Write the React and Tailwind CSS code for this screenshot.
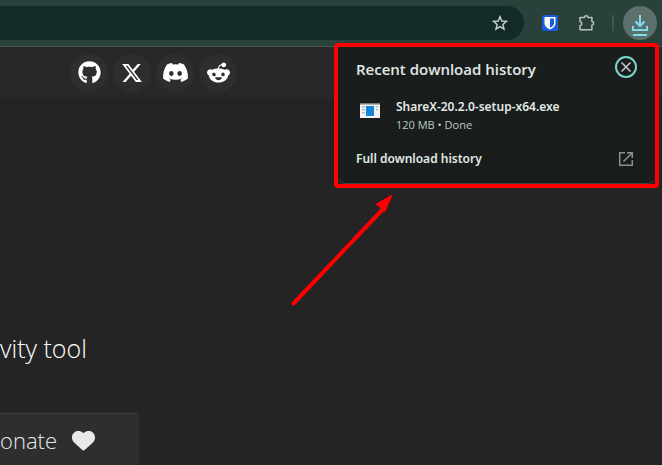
import { FaGithub, FaXTwitter, FaDiscord, FaRedditAlien, FaHeart } from "react-icons/fa6";

const socials = [
  { name: "GitHub", Icon: FaGithub, size: 23 },
  { name: "X", Icon: FaXTwitter, size: 22 },
  { name: "Discord", Icon: FaDiscord, size: 27 },
  { name: "Reddit", Icon: FaRedditAlien, size: 23 },
];

function StarIcon() {
  return (
    <svg width="16" height="16" viewBox="0 0 16 16" fill="none" stroke="#c3cecb" strokeWidth="1.5" aria-hidden="true">
      <path d="M8 1.7 9.8 6l4.7.4-3.6 3.1 1.1 4.6L8 11.6l-4 2.5 1.1-4.6L1.500 6.400 6.200 6z" />
    </svg>
  );
}

function ShieldIcon() {
  return (
    <svg width="16" height="16" viewBox="0 0 16 16" aria-hidden="true">
      <rect width="16" height="16" rx="2" fill="#175ddc" />
      <path d="M2.500 2h11v6.300c0 3-2.800 5-5.500 6.200-2.700-1.200-5.500-3.200-5.500-6.200z" fill="#fff" />
      <path d="M8 3.600h4v4.700c0 2-2 3.500-4 4.500z" fill="#175ddc" />
    </svg>
  );
}

function PuzzleIcon() {
  return (
    <svg width="18" height="18" viewBox="0 0 18 18" fill="none" stroke="#b5c4c0" strokeWidth="1.5" strokeLinejoin="round" aria-hidden="true">
      <path d="M2 3.500h4.500a1.700 1.700 0 0 1 3.400 0h4v4a1.700 1.700 0 0 1 0 3.400v4.900H2v-4a2.200 2.200 0 0 0 0-4.300z" />
    </svg>
  );
}

function DownloadIcon() {
  return (
    <svg width="18" height="22" viewBox="0 0 18 22" fill="none" stroke="#7fdcec" strokeWidth="2" aria-hidden="true">
      <path d="M9 0v10M4.500 6.500 9 11l4.500-4.500M2 11v4h14v-4M2 20h14" />
    </svg>
  );
}

function Toolbar() {
  return (
    <header className="flex h-[47px] items-start border-b border-[#47544f] bg-[#29403b] pt-1.5 pr-[5px]">
      <div className="flex h-[34px] min-w-0 flex-1 items-center justify-end rounded-r-full bg-[#122b27] pr-4">
        <button aria-label="Bookmark this tab" className="block"><StarIcon /></button>
      </div>
      <div className="flex h-[34px] items-center pl-[18px]">
        <button aria-label="Password manager"><ShieldIcon /></button>
        <button aria-label="Extensions" className="ml-5"><PuzzleIcon /></button>
        <span className="mr-[9px] ml-4 h-4 w-0.5 bg-[#3d5650]" />
        <button aria-label="Downloads" className="flex size-[34px] items-center justify-center rounded-full bg-[#5d716c] pt-1.5"><DownloadIcon /></button>
      </div>
    </header>
  );
}

function DownloadPanel() {
  return (
    <section aria-label="Downloads" className="absolute top-[43px] right-[3px] w-[325px] rounded-sm border-4 border-[#ff0000] bg-[#242424]">
      <div className="flex h-[137px] flex-col rounded-b-lg border-b border-[#3a4341] bg-[#191e1d] pl-[18px] text-[#e1e8e6]">
        <div className="flex h-11 items-center justify-between pr-[18px]">
          <h2 className="text-[15px] leading-5 font-semibold">Recent download history</h2>
          <button aria-label="Close" className="mb-1 flex size-[22px] items-center justify-center rounded-full border-2 border-[#7ad5c8]">
            <svg width="10" height="10" viewBox="0 0 10 10" stroke="#c7cfcd" strokeWidth="1.5" aria-hidden="true"><path d="M.5.5l9 9m0-9-9 9" /></svg>
          </button>
        </div>
        <div className="flex items-start pt-[7px]">
          <svg width="20" height="16" viewBox="0 0 20 16" className="mt-[5px] ml-1" aria-hidden="true">
            <path d="M0 0h20v15H0z" fill="#f2f2f2" />
            <path d="M0 0h20v1.500H0z" fill="#777" />
            <path d="M2 3h3v1.500H2zm0 3h3v1.500H2zm0 3h3v1.500H2zM16 3h2v1.500h-2zm0 3h2v1.500h-2z" fill="#b6bcc2" />
            <path d="M6 3h8v10H6z" fill="#1485d8" />
          </svg>
          <div className="pl-4">
            <p className="font-['Noto_Sans','Open_Sans',sans-serif] text-[12px] leading-[18px] font-semibold">ShareX-20.2.0-setup-x64.exe</p>
            <p className="text-[11px] leading-[18px] text-[#bdc7c4]">120 MB • Done</p>
          </div>
        </div>
        <a href="#history" className="mt-3.5 flex items-center justify-between pr-[21px] font-['Noto_Sans','Open_Sans',sans-serif] text-[12px] leading-[22px] font-semibold">
          Full download history
          <svg width="16" height="16" viewBox="0 0 16 16" fill="none" stroke="#899190" strokeWidth="1.5" aria-hidden="true">
            <path d="M7 1.700H1.700v12.600h12.600V9M9 1.700h5.300V7M14.300 1.700 5.500 10.500" />
          </svg>
        </a>
      </div>
    </section>
  );
}

export default function App() {
  return (
    <div className="relative flex min-h-screen flex-col overflow-hidden bg-[#242424] font-['Open_Sans','Noto_Sans',sans-serif]">
      <Toolbar />
      <nav aria-label="Social links" className="flex h-[51px] items-center gap-[5px] bg-[#282828] pl-[70px] text-white">
        {socials.map(({ name, Icon, size }) => (
          <a key={name} href={"#" + name} aria-label={name} className="flex size-[38px] items-center justify-center rounded-full bg-[#2e2e2e]">
            <Icon size={size} />
          </a>
        ))}
      </nav>
      <main className="flex flex-1 flex-col items-start justify-end">
        <p className="mb-[47px] text-[25px] leading-9 font-light text-white">vity tool</p>
        <button className="flex h-[52px] w-[139px] items-center gap-[15px] rounded-tr border-t border-[#3d3d3d] bg-[#2e2e2e] pt-0.5 text-[22px] font-light text-[#e8e9ea]">
          onate
          <FaHeart size={23} />
        </button>
      </main>
      <DownloadPanel />
      <svg width="110" height="120" viewBox="0 0 110 120" className="absolute top-[190px] left-[286px]" aria-hidden="true">
        <path d="M7.500 113.500 97 19" stroke="#f00" strokeWidth="4" strokeLinecap="round" />
        <path d="M107 4 89.500 14l9.500 8.500z" fill="#f00" />
      </svg>
    </div>
  );
}
